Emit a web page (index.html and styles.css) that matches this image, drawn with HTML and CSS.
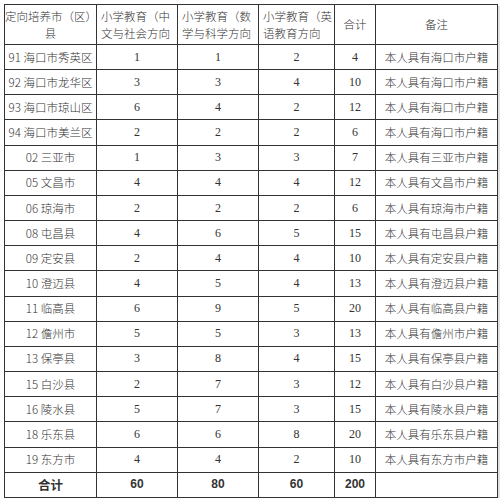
FILE: index.html
```html
<!DOCTYPE html>
<html lang="zh-CN">
<head>
<meta charset="utf-8">
<title>定向培养计划</title>
<link rel="stylesheet" href="styles.css">
</head>
<body>
<div class="sheet">
<table class="plan">
  <colgroup>
    <col class="c-area">
    <col class="c-num">
    <col class="c-num">
    <col class="c-num3">
    <col class="c-sum">
    <col class="c-note">
  </colgroup>
  <thead>
    <tr class="head">
      <th>定向培养市（区）<br>县</th>
      <th class="left">小学教育（中<br>文与社会方向</th>
      <th class="left">小学教育（数<br>学与科学方向</th>
      <th class="left">小学教育（英<br>语教育方向</th>
      <th>合计</th>
      <th>备注</th>
    </tr>
  </thead>
  <tbody>
    <tr><td>91 海口市秀英区</td><td class="n">1</td><td class="n">1</td><td class="n">2</td><td class="n">4</td><td>本人具有海口市户籍</td></tr>
    <tr><td>92 海口市龙华区</td><td class="n">3</td><td class="n">3</td><td class="n">4</td><td class="n">10</td><td>本人具有海口市户籍</td></tr>
    <tr><td>93 海口市琼山区</td><td class="n">6</td><td class="n">4</td><td class="n">2</td><td class="n">12</td><td>本人具有海口市户籍</td></tr>
    <tr><td>94 海口市美兰区</td><td class="n">2</td><td class="n">2</td><td class="n">2</td><td class="n">6</td><td>本人具有海口市户籍</td></tr>
    <tr><td>02 三亚市</td><td class="n">1</td><td class="n">3</td><td class="n">3</td><td class="n">7</td><td>本人具有三亚市户籍</td></tr>
    <tr><td>05 文昌市</td><td class="n">4</td><td class="n">4</td><td class="n">4</td><td class="n">12</td><td>本人具有文昌市户籍</td></tr>
    <tr><td>06 琼海市</td><td class="n">2</td><td class="n">2</td><td class="n">2</td><td class="n">6</td><td>本人具有琼海市户籍</td></tr>
    <tr><td>08 屯昌县</td><td class="n">4</td><td class="n">6</td><td class="n">5</td><td class="n">15</td><td>本人具有屯昌县户籍</td></tr>
    <tr><td>09 定安县</td><td class="n">2</td><td class="n">4</td><td class="n">4</td><td class="n">10</td><td>本人具有定安县户籍</td></tr>
    <tr><td>10 澄迈县</td><td class="n">4</td><td class="n">5</td><td class="n">4</td><td class="n">13</td><td>本人具有澄迈县户籍</td></tr>
    <tr><td>11 临高县</td><td class="n">6</td><td class="n">9</td><td class="n">5</td><td class="n">20</td><td>本人具有临高县户籍</td></tr>
    <tr><td>12 儋州市</td><td class="n">5</td><td class="n">5</td><td class="n">3</td><td class="n">13</td><td>本人具有儋州市户籍</td></tr>
    <tr><td>13 保亭县</td><td class="n">3</td><td class="n">8</td><td class="n">4</td><td class="n">15</td><td>本人具有保亭县户籍</td></tr>
    <tr><td>15 白沙县</td><td class="n">2</td><td class="n">7</td><td class="n">3</td><td class="n">12</td><td>本人具有白沙县户籍</td></tr>
    <tr><td>16 陵水县</td><td class="n">5</td><td class="n">7</td><td class="n">3</td><td class="n">15</td><td>本人具有陵水县户籍</td></tr>
    <tr><td>18 乐东县</td><td class="n">6</td><td class="n">6</td><td class="n">8</td><td class="n">20</td><td>本人具有乐东县户籍</td></tr>
    <tr><td>19 东方市</td><td class="n">4</td><td class="n">4</td><td class="n">2</td><td class="n">10</td><td>本人具有东方市户籍</td></tr>
    <tr class="total"><td>合计</td><td class="n">60</td><td class="n">80</td><td class="n">60</td><td class="n">200</td><td></td></tr>
  </tbody>
</table>
</div>
</body>
</html>
```

FILE: styles.css
```css
html, body {
  margin: 0;
  padding: 0;
  background: #ffffff;
}

.sheet {
  padding: 4px 0 0 4px;
}

.plan {
  border-collapse: collapse;
  table-layout: fixed;
  width: 493px;
  font-family: "Noto Sans CJK SC", "Noto Sans", sans-serif;
  font-size: 11.5px;
  color: #333333;
  box-shadow: 2px 2px 0 #e2e2e2;
}

.c-area { width: 92px; }
.c-num { width: 81px; }
.c-num3 { width: 76px; }
.c-sum { width: 41px; }
.c-note { width: 122px; }

.plan th,
.plan td {
  border: 1px solid #333333;
  padding: 0;
  text-align: center;
  vertical-align: middle;
  white-space: nowrap;
  font-weight: 300;
  line-height: 17px;
}

.plan .head th {
  height: 39px;
}

.plan .head th.left {
  text-align: left;
  padding-left: 4px;
}

.plan tbody tr {
  height: 25.17px;
}

.plan td.n {
  font-family: "Liberation Serif", "DejaVu Serif", serif;
  font-size: 12px;
  font-weight: normal;
}

.plan .total td {
  font-weight: bold;
  font-size: 12.5px;
}

.plan .total td.n {
  font-family: "Liberation Sans", "Noto Sans", sans-serif;
  font-size: 12px;
  font-weight: bold;
}
```
